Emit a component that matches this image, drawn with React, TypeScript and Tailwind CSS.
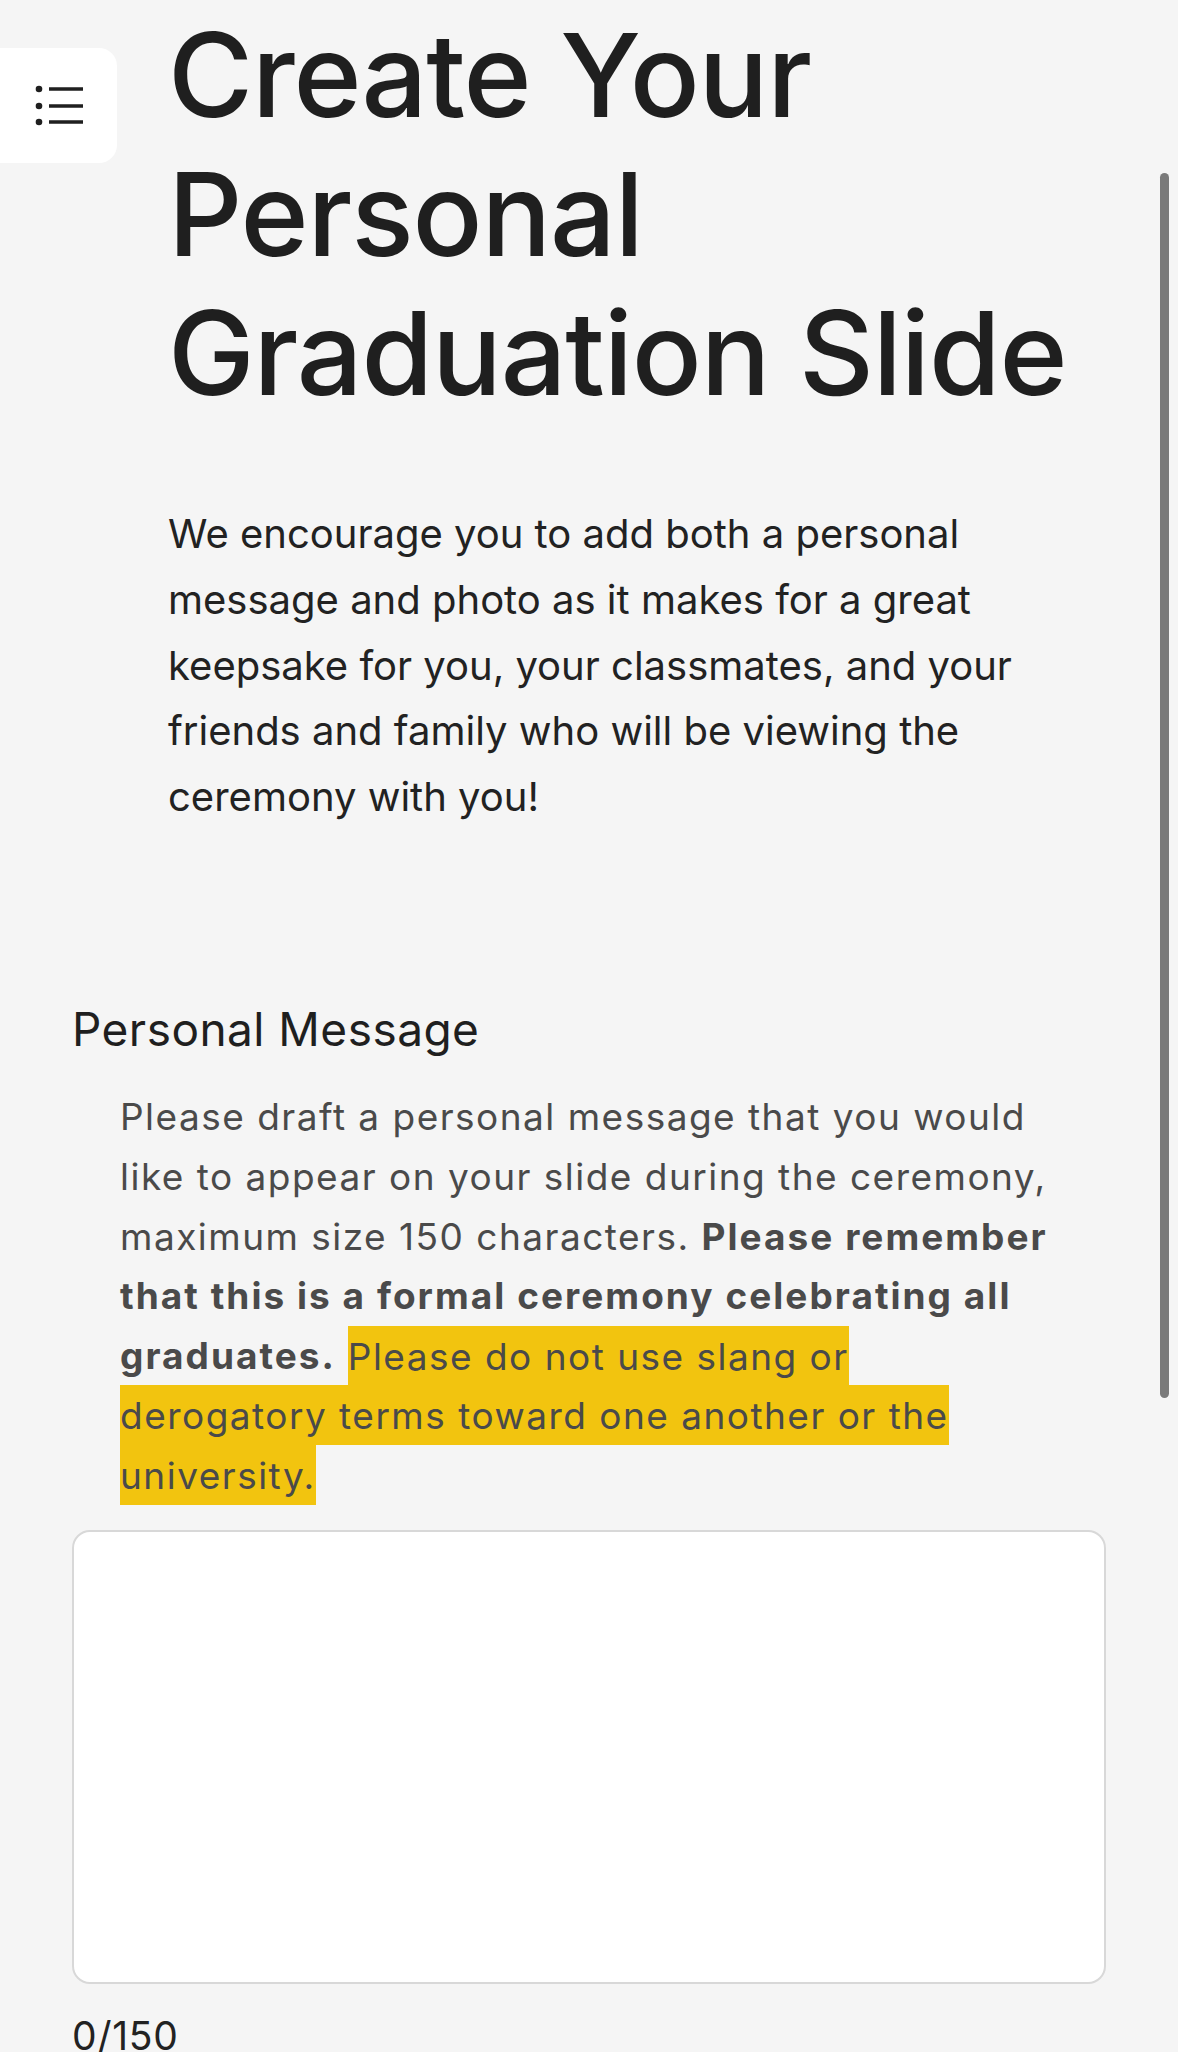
const App = () => {
  return (
    <div className="relative min-h-screen bg-[#f5f5f5] text-[#1f1f1f]" style={{ fontFamily: "Inter, 'Noto Sans', sans-serif" }}>
      {/* Floating menu toggle */}
      <button className="absolute left-0 top-[48px] w-[117px] h-[115px] bg-white rounded-r-[18px]">
        <svg width="117" height="115" viewBox="0 0 117 115" fill="none">
          <circle cx="39" cy="41" r="3.3" fill="#1f1f1f" />
          <circle cx="39" cy="58" r="3.3" fill="#1f1f1f" />
          <circle cx="39" cy="74" r="3.3" fill="#1f1f1f" />
          <path d="M49 41H83M49 58H83M49 74H83" stroke="#1f1f1f" strokeWidth="3.6" />
        </svg>
      </button>

      {/* Overlay scrollbar */}
      <div className="absolute right-[9px] top-[173px] w-[9px] h-[1225px] rounded-full bg-[#7a7a7a]"></div>

      <main className="mx-[72px] pt-[6px]">
        <div className="pl-[96px]">
          <h1 className="text-[116px] leading-[139px] font-medium tracking-[-0.01em]">
            Create Your Personal Graduation Slide
          </h1>

          <p className="mt-[78px] text-[40px] leading-[65.8px] text-[#222]">
            We encourage you to add both a personal message and photo as it makes for a great keepsake for you, your classmates, and your friends and family who will be viewing the ceremony with you!
          </p>
        </div>

        <section className="mt-[172px]">
          <h2 className="text-[46px] leading-[55px] tracking-[0.01em] text-[#1f1f1f]">Personal Message</h2>
          <p className="mt-[30px] px-[48px] text-[37px] leading-[59.8px] tracking-[0.04em] text-[#4a4a4a]">
            Please draft a personal message that you would like to appear on your slide during the ceremony, maximum size 150 characters.{" "}
            <strong className="font-bold tracking-[0.055em]">Please remember that this is a formal ceremony celebrating all graduates.</strong>{" "}
            <span className="bg-[#f2c40f] py-[7.5px]">
              Please do not use slang or derogatory terms toward one another or the university.
            </span>
          </p>

          <textarea className="mt-[24px] block w-full h-[454px] bg-white border-2 border-[#d8d8d8] rounded-[18px] resize-none outline-none"></textarea>

          <p className="mt-[22px] text-[39px] leading-[59.8px] tracking-[0.02em] text-[#222]">0/150</p>
        </section>
      </main>
    </div>
  );
};

export default App;
